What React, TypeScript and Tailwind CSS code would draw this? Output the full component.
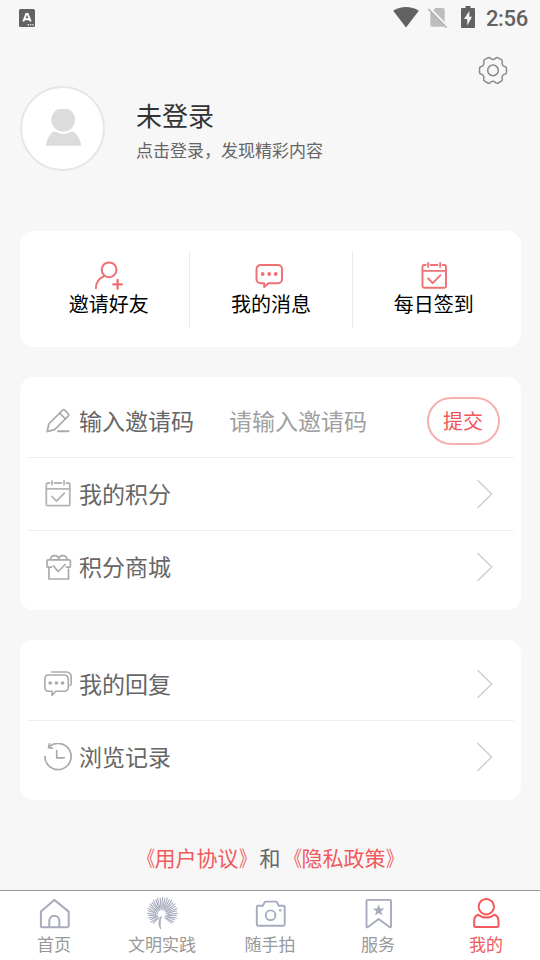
import React from "react";

type IconProps = { icon: React.ReactNode; label: string };

const line = {
  fill: "none",
  stroke: "currentColor",
  strokeLinecap: "round" as const,
  strokeLinejoin: "round" as const,
};

function polar(cx: number, cy: number, r: number, deg: number) {
  const a = (deg * Math.PI) / 180;
  return `${(cx + r * Math.cos(a)).toFixed(2)} ${(cy + r * Math.sin(a)).toFixed(2)}`;
}

function Gear() {
  const c = 15;
  let d = "";
  for (let k = 0; k < 6; k++) {
    const a = k * 60;
    d += `${k ? "L" : "M"}${polar(c, c, 12.6, a - 18)}Q${polar(c, c, 13.9, a - 14)} ${polar(c, c, 13.6, a - 8)}`;
    d += `L${polar(c, c, 13.6, a + 8)}Q${polar(c, c, 13.9, a + 14)} ${polar(c, c, 12.6, a + 18)}`;
    d += `C${polar(c, c, 10.6, a + 21)} ${polar(c, c, 10.6, a + 39)} ${polar(c, c, 12.6, a + 42)}`;
  }
  return (
    <svg className="h-[30px] w-[30px] text-[#8a8a8a]" viewBox="0 -0.4 30 30" {...line} strokeWidth="1.5">
      <path d={d + "Z"} />
      <circle cx="15" cy="15" r="5.3" />
    </svg>
  );
}

function InviteIcon() {
  return (
    <svg className="h-[30px] w-8" viewBox="0 0 32 30" {...line} strokeWidth="2">
      <circle cx="16.1" cy="9.8" r="7.4" />
      <path d="M2.9 28.3C2.9 22.8 6 18.5 11.2 16.2" />
      <path d="M24.6 19.9v8.8M20.2 24.3h8.8" strokeWidth="2.3" />
    </svg>
  );
}

function MessageIcon() {
  return (
    <svg className="h-[30px] w-8" viewBox="0 0 32 30" {...line} strokeWidth="2">
      <path d="M5.5 5H23a4 4 0 0 1 4 4v10.2a4 4 0 0 1-4 4h-9.600L9.200 27v-3.800H5.500a4 4 0 0 1-4-4V9a4 4 0 0 1 4-4Z" />
      <g fill="currentColor" stroke="none">
        <circle cx="7.700" cy="14" r="1.900" />
        <circle cx="14.200" cy="14" r="1.900" />
        <circle cx="20.700" cy="14" r="1.900" />
      </g>
    </svg>
  );
}

function CalendarShape() {
  return (
    <>
      <path d="M7.700 5H6a1.500 1.500 0 0 0-1.500 1.500v19.700a1.500 1.500 0 0 0 1.500 1.500h20.500a1.500 1.500 0 0 0 1.500-1.500V6.500a1.500 1.500 0 0 0-1.500-1.500H24.800M12.800 5h6.700" />
      <path d="M4.500 10.900H28" />
      <path d="M10.200 3v3.700M22.200 3v3.700" />
      <path d="M10.200 18.500l4.500 4.700 7.800-8" />
    </>
  );
}

function CheckInIcon() {
  return (
    <svg className="h-[30px] w-8" viewBox="0 0 32 30" {...line} strokeWidth="1.9">
      <CalendarShape />
    </svg>
  );
}

function PointsIcon() {
  return (
    <svg className="size-7 text-[#b4b4b4]" viewBox="2.2 2 28 28" {...line} strokeWidth="1.8">
      <CalendarShape />
    </svg>
  );
}

function PencilIcon() {
  return (
    <svg className="size-7" viewBox="0 0 28 28" {...line} strokeWidth="1.700">
      <path d="M3.200 24.600L4.800 17 18.400 3.300a1.800 1.800 0 0 1 2.500 0L24.200 6.600a1.800 1.800 0 0 1 0 2.500L10.600 22.600Z" />
      <path d="M15.600 6.100l5.800 5.800" />
      <path d="M14 24.200h10.500" strokeWidth="2" />
    </svg>
  );
}

function GiftIcon() {
  return (
    <svg className="size-7" viewBox="0 0 28 28" {...line} strokeWidth="1.700">
      <path d="M6.500 6.500C6.700 1.300 14.500 1.300 14.700 6.500C14.900 1.300 22.700 1.300 23 6.500" />
      <path d="M7.500 14.200H4a1 1 0 0 1-1-1V7.800a1 1 0 0 1 1-1H25.400a1 1 0 0 1 1 1v5.400a1 1 0 0 1-1 1H22.500" />
      <path d="M5 14.200v11.800h19.500V16" />
      <path d="M9.500 13l4.700 5.500 7-7" />
    </svg>
  );
}

function ReplyIcon() {
  return (
    <svg className="size-7" viewBox="0 0 28 28" {...line} strokeWidth="1.600">
      <path d="M4.500 5H20.500a3.800 3.800 0 0 1 3.800 3.800v8.700a3.800 3.800 0 0 1-3.800 3.800h-8.800L8 25.500v-4.200H4.500A3.800 3.800 0 0 1 .9 17.500V8.800A3.800 3.800 0 0 1 4.500 5Z" />
      <path d="M7.800 2h14.800a4.600 4.600 0 0 1 4.600 4.600v5.800q0 2-1 3" />
      <g fill="currentColor" stroke="none">
        <circle cx="6.200" cy="13" r="1.800" />
        <circle cx="12.400" cy="13" r="1.800" />
        <circle cx="18.600" cy="13" r="1.800" />
      </g>
    </svg>
  );
}

function HistoryIcon() {
  return (
    <svg className="size-7" viewBox="0 0 28 28" {...line} strokeWidth="1.700">
      <path d="M.9 13.500A13.100 13.100 0 1 0 5 4" />
      <path d="M5.400 .9L4.500 4.600L8.400 5.100" />
      <path d="M12.700 7.500v7.300h7.600" />
    </svg>
  );
}

function Chevron() {
  return (
    <svg className="h-[30px] w-4 text-[#cccccc]" viewBox="0 0 16 30" fill="none" stroke="currentColor" strokeWidth="1.300">
      <path d="M.4 1L14.700 15L.4 29" />
    </svg>
  );
}

function HomeTab() {
  return (
    <svg className="size-[34px]" viewBox="0 0 34 34" {...line} strokeWidth="2">
      <path d="M17.300 3.900L31.700 15.600V29.800a1.500 1.500 0 0 1-1.500 1.500H5.400a1.500 1.500 0 0 1-1.500-1.500V15.600Z" />
      <path d="M12.300 31V24.800a5 5 0 0 1 10 0V31" />
    </svg>
  );
}

function DandelionTab() {
  const rays = Array.from({ length: 31 }, (_, i) => 130 + (i * 280) / 30);
  return (
    <svg className="size-[34px]" viewBox="0 0 34 34" {...line}>
      {rays.map((a, i) => (
        <path
          key={i}
          d={`M${polar(16.8, 18.2, i % 2 ? 6.5 : 4.5, a)}L${polar(17.5, 16.3, i % 2 ? 15 : 14.2, a)}`}
          strokeWidth="1.1"
        />
      ))}
      <path d="M16.300 20.500C13.300 24 13.300 28.500 15.600 33C15 28.500 15 24 16.300 20.500Z" fill="currentColor" strokeWidth="0.8" />
    </svg>
  );
}

function CameraTab() {
  return (
    <svg className="size-[34px]" viewBox="0 0 34 34" {...line} strokeWidth="1.900">
      <path d="M5 9.700H9.800L12 5.600H23.600L25.700 9.700H30.500a1.200 1.200 0 0 1 1.200 1.200V28.600a1.200 1.200 0 0 1-1.200 1.200H5a1.200 1.200 0 0 1-1.200-1.200V10.900A1.200 1.200 0 0 1 5 9.700Z" />
      <circle cx="17.600" cy="19.300" r="4.900" />
      <circle cx="27.200" cy="14.300" r="1.200" fill="currentColor" stroke="none" />
    </svg>
  );
}

function BookmarkTab() {
  return (
    <svg className="size-[34px]" viewBox="0 0 34 34" {...line} strokeWidth="1.900">
      <path d="M6.500 3.900H29a1 1 0 0 1 1 1V30.300q0 1.700-1.500.6L17.700 23 7 30.900Q5.500 32 5.500 30.300V4.900a1 1 0 0 1 1-1Z" />
      <path
        d="M17.700 8.300L19.200 12.400L23.600 12.600L20.200 15.300L21.300 19.500L17.700 17.100L14.100 19.500L15.200 15.300L11.800 12.600L16.200 12.400Z"
        fill="currentColor"
        stroke="none"
      />
    </svg>
  );
}

function MeTab() {
  return (
    <svg className="size-[34px]" viewBox="0 0 34 34" {...line} strokeWidth="2">
      <circle cx="17.300" cy="10.700" r="7.700" />
      <path d="M9.300 18.700C6.500 19.600 5.200 21.700 5.200 24.800V29.600a1.500 1.500 0 0 0 1.500 1.500H28a1.500 1.500 0 0 0 1.500-1.500V24.800C29.500 21.700 28 19.600 25.300 18.700C21 22.500 13.600 22.500 9.300 18.700Z" />
    </svg>
  );
}

function StatusBar() {
  return (
    <div className="flex h-[34px] items-center pl-[19px] pr-3 text-[#626262]">
      <svg className="mt-0.5 h-[18px] w-4" viewBox="0 0 16 18">
        <rect width="16" height="18" rx="1.500" fill="currentColor" />
        <path d="M4.300 12.500L7.300 5H8.700L11.700 12.500M5.500 10.200H10.500" fill="none" stroke="#fff" strokeWidth="1.900" />
        <path d="M8.500 15.800h6" stroke="#e5e5e5" strokeWidth="1.400" strokeDasharray="1.400 1" />
      </svg>
      <svg className="ml-auto h-[22px] w-[26px]" viewBox="0 0 26 22">
        <path d="M.2 4.800C7.500-.2 18.500-.2 25.800 4.800L13 21.500Z" fill="currentColor" />
      </svg>
      <svg className="ml-[9px] h-[22px] w-5" viewBox="0 0 20 22">
        <path d="M7.500 2H15a1.700 1.700 0 0 1 1.700 1.700V19a1.700 1.700 0 0 1-1.700 1.700H4A1.700 1.700 0 0 1 2.300 19V7Z" fill="#bdbdbd" />
        <path d="M1.500 1.700L20 21" stroke="#f7f7f7" strokeWidth="2" />
        <path d="M.3 3L18.500 21.700" stroke="#b5b5b5" strokeWidth="1.700" />
      </svg>
      <svg className="ml-[13px] h-[22px] w-[14px]" viewBox="0 0 14 22">
        <path d="M4.500 0H9.500V2H13a1 1 0 0 1 1 1V21a1 1 0 0 1-1 1H1a1 1 0 0 1-1-1V3a1 1 0 0 1 1-1H4.500Z" fill="currentColor" />
        <path d="M8.300 5L3 13H6.300V19.500L11 10.700H8.300Z" fill="#f7f7f7" />
      </svg>
      <span className="ml-[11px] mt-1 font-[Roboto,sans-serif] text-[22px] font-medium leading-[26px] tracking-[-0.3px]">2:56</span>
    </div>
  );
}

function Shortcut({ icon, label }: IconProps) {
  return (
    <div className="flex h-[77px] flex-col items-center pt-[9px] text-[#f07173]">
      {icon}
      <span className="text-[20px] leading-7 text-black">{label}</span>
    </div>
  );
}

function Row({ icon, label, last = false, children }: IconProps & { last?: boolean; children: React.ReactNode }) {
  return (
    <div
      className={
        last
          ? "flex h-[73px] items-center pb-px pl-4 text-[#aaaaaa]"
          : "flex h-[73px] items-center border-b border-[#eeeef3] pl-4 text-[#aaaaaa]"
      }
    >
      {icon}
      <span className="ml-[7px] pb-0.5 text-[23px] leading-8 text-[#666666]">{label}</span>
      {children}
    </div>
  );
}

function LinkRow(props: IconProps & { last?: boolean }) {
  return (
    <Row {...props}>
      <span className="ml-auto pr-[21px]">
        <Chevron />
      </span>
    </Row>
  );
}

function Agreement({ title }: { title: string }) {
  return (
    <a className="text-[#f05a5c]">
      <span className="inline-block origin-right scale-x-[.8]">《</span>
      {title}
      <span className="inline-block origin-left scale-x-[.8]">》</span>
    </a>
  );
}

function Tab({ icon, label, active = false }: IconProps & { active?: boolean }) {
  return (
    <div className={active ? "flex flex-col items-center pt-[5px] text-[#f1595b]" : "flex flex-col items-center pt-[5px] text-[#a6abbd]"}>
      {icon}
      <span className={active ? "mt-0.5 text-[17px] leading-6" : "mt-0.5 text-[17px] leading-6 text-[#999999]"}>{label}</span>
    </div>
  );
}

export default function App() {
  return (
    <div className="flex h-[960px] w-[540px] flex-col overflow-hidden bg-[#f7f7f7] font-['Noto_Sans_CJK_SC',sans-serif]">
      <StatusBar />

      <header className="flex h-[197px] pl-5 pr-8">
        <div className="mt-[52px] flex size-[85px] items-center justify-center rounded-full border-2 border-[#e6e6e6] bg-white">
          <svg className="size-10" viewBox="0 0.7 40 40" fill="#dcdcdc">
            <path d="M2.800 37.500C3.500 31.500 6.300 26.500 10 23.500H30.500C34.500 26.500 37.500 31.500 38.200 37.500Z" />
            <circle cx="20.200" cy="11.500" r="13" stroke="#fff" strokeWidth="2.200" />
          </svg>
        </div>
        <div className="ml-[31px] mt-[63px]">
          <div className="text-[26px] leading-9 text-[#333333]">未登录</div>
          <div className="mt-[5px] text-[17px] leading-6 text-[#666666]">点击登录，发现精彩内容</div>
        </div>
        <div className="ml-auto mt-[21px]">
          <Gear />
        </div>
      </header>

      <main className="flex flex-col gap-[30px] pl-5 pr-[19px]">
        <section className="h-[116px] rounded-[14px] bg-white pl-2 pr-1.5 pt-5">
          <div className="grid grid-cols-3 divide-x divide-[#ececec]">
            <Shortcut icon={<InviteIcon />} label="邀请好友" />
            <Shortcut icon={<MessageIcon />} label="我的消息" />
            <Shortcut icon={<CheckInIcon />} label="每日签到" />
          </div>
        </section>

        <section className="rounded-[14px] bg-white pb-1.5 pl-2 pr-[7px] pt-2">
          <Row icon={<PencilIcon />} label="输入邀请码">
            <input
              className="ml-[35px] w-[150px] pb-[3px] text-[23px] leading-8 text-[#666666] outline-none placeholder:text-[#a0a0a0]"
              placeholder="请输入邀请码"
            />
            <button className="ml-auto mr-[14.5px] h-12 w-[73px] rounded-full border-2 border-[#f6b0b0] text-[20px] leading-7 text-[#f05557]">
              提交
            </button>
          </Row>
          <LinkRow icon={<PointsIcon />} label="我的积分" />
          <LinkRow icon={<GiftIcon />} label="积分商城" last />
        </section>

        <section className="rounded-[14px] bg-white pb-1.5 pl-2 pr-[7px] pt-2">
          <LinkRow icon={<ReplyIcon />} label="我的回复" />
          <LinkRow icon={<HistoryIcon />} label="浏览记录" last />
        </section>
      </main>

      <p className="mt-[42px] text-center text-[21px] leading-[30px] text-[#666666]">
        <Agreement title="用户协议" />和<Agreement title="隐私政策" />
      </p>

      <nav className="mt-auto grid h-[70px] grid-cols-5 border-t border-[#999999] bg-white">
        <Tab icon={<HomeTab />} label="首页" />
        <Tab icon={<DandelionTab />} label="文明实践" />
        <Tab icon={<CameraTab />} label="随手拍" />
        <Tab icon={<BookmarkTab />} label="服务" />
        <Tab icon={<MeTab />} label="我的" active />
      </nav>
    </div>
  );
}
